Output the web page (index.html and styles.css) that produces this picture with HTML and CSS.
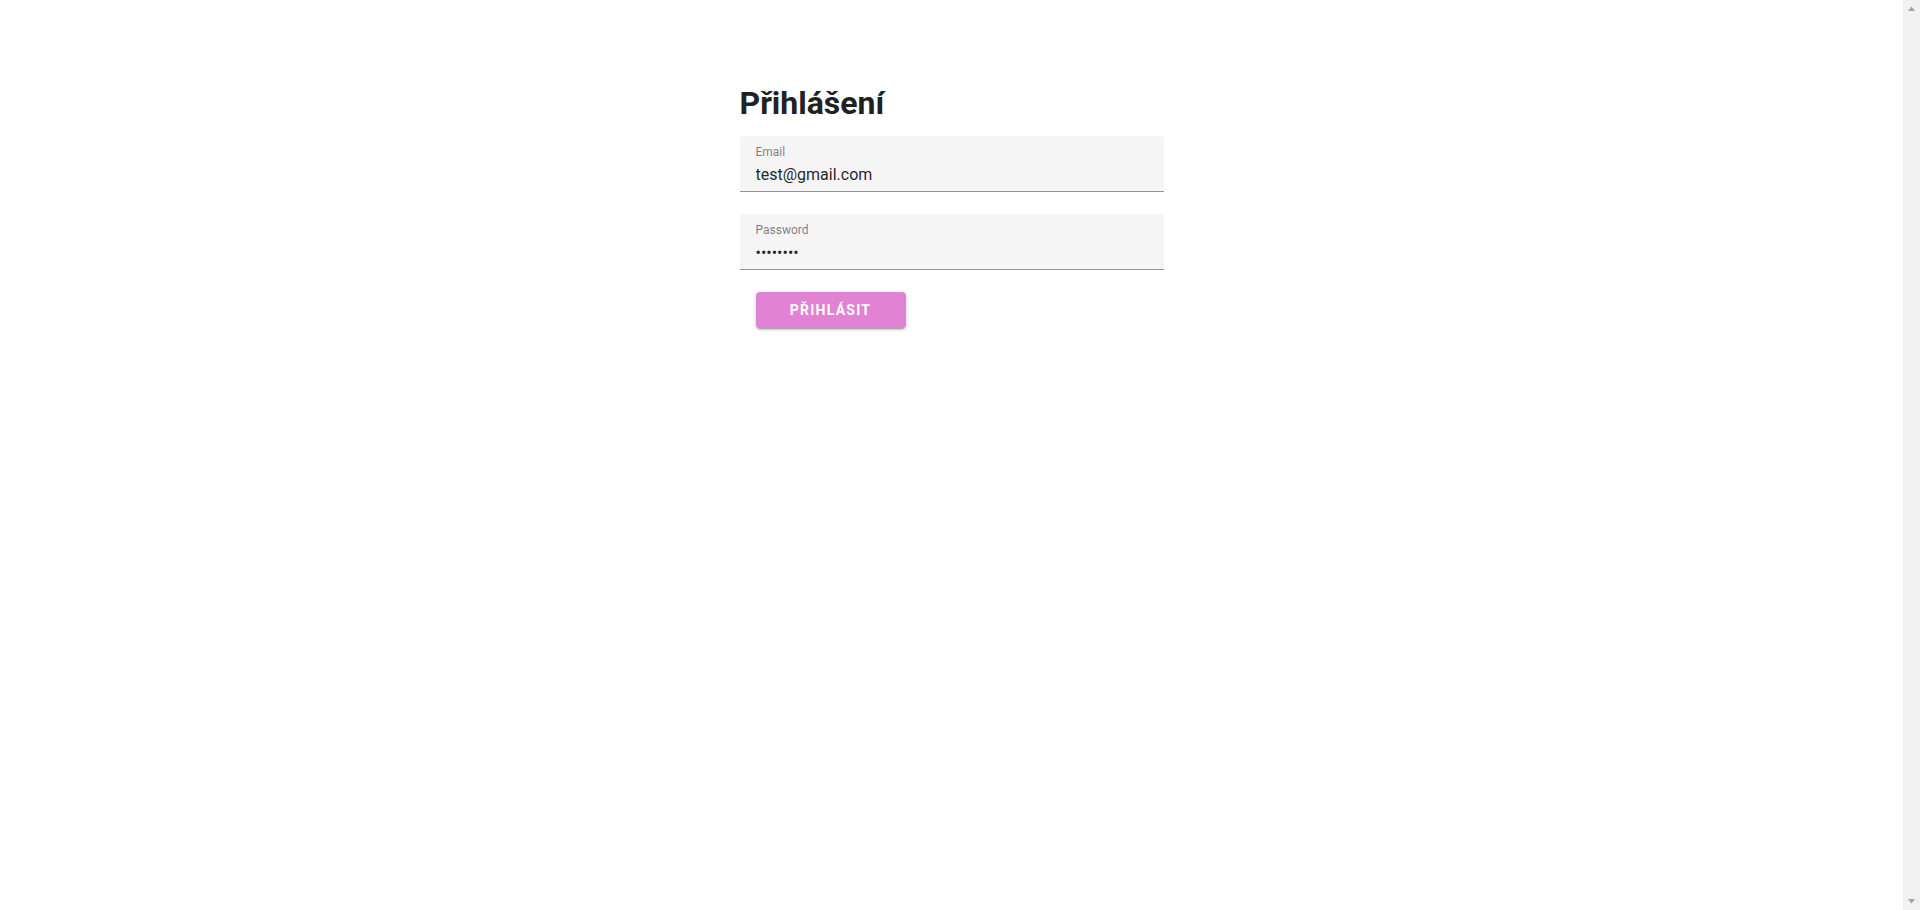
FILE: index.html
```html
<!DOCTYPE html>
<html lang="cs">
<head>
<meta charset="utf-8">
<title>Přihlášení</title>
<link rel="stylesheet" href="styles.css">
</head>
<body>
<div class="page">
  <main class="login">
    <h1 class="login-title">Přihlášení</h1>
    <form class="login-form">
      <label class="field">
        <span class="field-label">Email</span>
        <input class="field-input" type="email" value="test@gmail.com">
      </label>
      <label class="field">
        <span class="field-label">Password</span>
        <input class="field-input" type="password" value="password">
      </label>
      <div class="actions">
        <button class="btn-primary" type="button">Přihlásit</button>
      </div>
    </form>
  </main>
</div>
<div class="scrollbar" aria-hidden="true">
  <svg class="sb-arrow" width="17" height="17" viewBox="0 0 17 17"><path d="M5 11h7L8.5 6.5z" fill="#a3a3a3"/></svg>
  <svg class="sb-arrow" width="17" height="17" viewBox="0 0 17 17"><path d="M5 6h7L8.5 10.5z" fill="#a3a3a3"/></svg>
</div>
</body>
</html>
```

FILE: styles.css
```css
html, body {
  height: 100%;
}
body {
  margin: 0;
  display: flex;
  background: #fff;
  font-family: Roboto, "Liberation Sans", sans-serif;
  color: rgba(0, 0, 0, 0.87);
  overflow: hidden;
}
.page {
  flex: 1;
  min-width: 0;
}
.scrollbar {
  width: 17px;
  flex: none;
  background: #f1f1f1;
  display: flex;
  flex-direction: column;
  justify-content: space-between;
}
.sb-arrow {
  display: block;
}
.login {
  width: 424px;
  margin: 0 auto;
  padding-top: 85px;
}
.login-title {
  margin: 0;
  font-size: 32px;
  font-weight: 700;
  line-height: 37px;
  color: #212121;
}
.login-form {
  display: flex;
  flex-direction: column;
  padding-top: 14px;
}
.field {
  display: flex;
  flex-direction: column;
  background: #f5f5f5;
  border-radius: 4px 4px 0 0;
  border-bottom: 1px solid #949494;
  padding: 9px 16px 7px;
  margin-bottom: 22px;
}
.field-label {
  font-size: 12px;
  line-height: 14px;
  color: rgba(0, 0, 0, 0.5);
}
.field-input {
  margin: 6px 0 0;
  padding: 0;
  border: 0;
  outline: none;
  background: transparent;
  font-family: Roboto, "Liberation Sans", sans-serif;
  font-size: 16px;
  line-height: 19px;
  height: 19px;
  color: rgba(0, 0, 0, 0.87);
}
.actions {
  display: flex;
  padding: 0 16px;
}
.btn-primary {
  width: 150px;
  height: 36px;
  border: 0;
  border-radius: 4px;
  background: #e182d4;
  color: #fff;
  font-family: Roboto, "Liberation Sans", sans-serif;
  font-size: 14px;
  font-weight: 700;
  letter-spacing: 1.25px;
  text-transform: uppercase;
  box-shadow: 0 3px 1px -2px rgba(0,0,0,0.2), 0 2px 2px 0 rgba(0,0,0,0.14), 0 1px 5px 0 rgba(0,0,0,0.12);
  cursor: pointer;
}
```
